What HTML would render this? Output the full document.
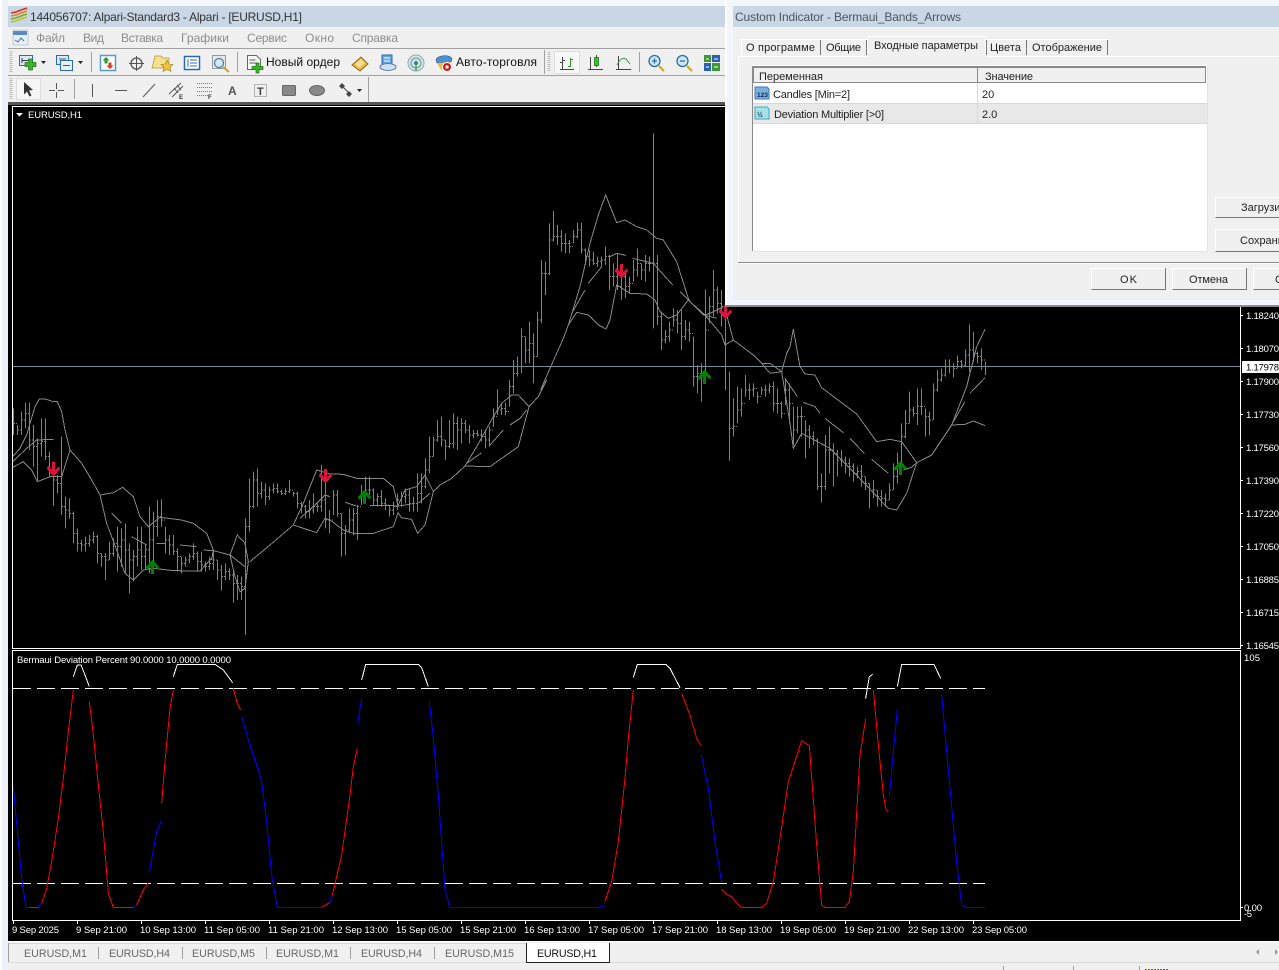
<!DOCTYPE html>
<html><head><meta charset="utf-8"><title>EURUSD,H1</title>
<style>
html,body{margin:0;padding:0;background:#f0f0f0;overflow:hidden}
svg{display:block;font-family:"Liberation Sans","Noto Sans CJK SC",sans-serif}
.l{fill:none;stroke:#888;stroke-width:3;shape-rendering:crispEdges}
.b{fill:none;stroke:#808080;stroke-width:1;shape-rendering:crispEdges}
.k{fill:none;stroke:#808080;stroke-width:3;stroke-dasharray:1 1;shape-rendering:crispEdges}
.c{fill:#fff;font-size:9.5px}
.m{fill:#8c8c8c;font-size:12px}
.d{fill:#222;font-size:11px}
.t{fill:#666;font-size:10.7px}
.g{fill:none;stroke:#a0a0a0;stroke-width:1;shape-rendering:crispEdges}
</style></head><body>
<svg width="1279" height="970" viewBox="0 0 1279 970" xmlns="http://www.w3.org/2000/svg">
<rect width="1279" height="970" fill="#f0f0f0"/>
<rect width="1279" height="6" fill="#f4f7fc"/>
<rect width="8" height="970" fill="#eef2f8"/>
<rect width="2" height="970" fill="#fff"/>
<rect x="8" y="6" width="720" height="21" fill="#c9d6e3"/>
<!-- title icon -->
<g fill="none" stroke-width="1.6"><path d="M11 13l5-1 5-2 6-2" stroke="#e03020"/><path d="M11 16l5-1 5-2 6-2" stroke="#f08020"/><path d="M11 19l5-1 5-2 6-2" stroke="#70b020"/><path d="M11 22l5-1 5-2 6-2" stroke="#c8c020"/></g>
<text x="30" y="21" font-size="12" fill="#333" textLength="272">144056707: Alpari-Standard3 - Alpari - [EURUSD,H1]</text>
<!-- menu -->
<rect x="13" y="30" width="15" height="15" fill="#e8eef6" stroke="#9ab" stroke-width=".5"/><rect x="13" y="31" width="14" height="4" fill="#5a88c0"/><path d="M15 40l3 2 3-4 3 3" stroke="#4070a0" fill="none"/>
<text class="m" x="36" y="42" textLength="29">Файл</text>
<text class="m" x="83" y="42" textLength="21">Вид</text>
<text class="m" x="121" y="42" textLength="42">Вставка</text>
<text class="m" x="181" y="42" textLength="48">Графики</text>
<text class="m" x="247" y="42" textLength="40">Сервис</text>
<text class="m" x="305" y="42" textLength="29">Окно</text>
<text class="m" x="352" y="42" textLength="46">Справка</text>
<!-- toolbar lines -->
<path d="M8 48.500H728M8 75.500H728" stroke="#a8a8a8" class="g"/>
<path d="M11 51V73M11 78V100M549 52V72" stroke="#bbb" stroke-width="3" stroke-dasharray="1 1" fill="none"/>
<path d="M91.500 52V72M237.500 52V72M544.500 50V74M639.500 52V72M74.500 79V99M368.500 77V102" class="g"/>
<!-- toolbar 1 icons -->
<g>
<rect x="19.500" y="55.500" width="13" height="10" fill="#dce8f5" stroke="#2a6ab0"/><path d="M22 58v5M22 60.500h7" stroke="#335" fill="none"/><path d="M28.500 59h4v3.500h3.500v4h-3.500v3.500h-4v-3.500h-3.500v-4h3.500z" fill="#3cb030" stroke="#1a7a10" stroke-width=".7"/>
<path d="M41 61h5l-2.500 3z" fill="#222"/>
<rect x="56.500" y="55.500" width="12" height="9" fill="#dce8f5" stroke="#2a6ab0"/><rect x="60.500" y="60.500" width="12" height="10" fill="#e8f0f8" stroke="#2a6ab0"/><path d="M59 59h7M63 65.500h7" stroke="#556"/>
<path d="M78 61h5l-2.500 3z" fill="#222"/>
<rect x="100.500" y="55.500" width="15" height="15" fill="#fff" stroke="#5a9ac8" stroke-width="1.500"/><path d="M106 57l3.500 3.500h-2v3h-3v-3h-2z" fill="#2a9a30"/><path d="M110 69l3.500-3.500h-2v-3h-3v3h-2z" fill="#d04020"/>
<circle cx="136.500" cy="63.500" r="5.500" fill="none" stroke="#555" stroke-width="1.300"/><path d="M136.500 56v15M129 63.500h15" stroke="#555" fill="none"/>
<path d="M155 56h6l2 2h6v4l-6 6h-11z" fill="#f5e090" stroke="#b89030" stroke-width=".7"/><path d="M167 60l2 4 4 .5-3 3 1 4-4-2-4 2 1-4-3-3 4-.5z" fill="#f0c040" stroke="#a08020" stroke-width=".6"/>
<rect x="184.500" y="56.500" width="15" height="13" fill="#fff" stroke="#2a6ab0" stroke-width="1.500"/><path d="M188 59v8M190 60h7M190 63h7M190 66h7" stroke="#3a70b0" fill="none"/>
<rect x="212.500" y="55.500" width="13" height="13" fill="#e8e8e8" stroke="#999"/><circle cx="219" cy="63" r="4.500" fill="#d8e8f5" stroke="#4a80a8" stroke-width="1.300"/><path d="M223 67l6 5" stroke="#c8a030" stroke-width="2" fill="none"/>
<path d="M247.500 55.500h9l4 4v10h-13z" fill="#f8f8f8" stroke="#666"/><path d="M249.500 60h6M249.500 63h8" stroke="#555" fill="none"/><path d="M256 63h3v3.500h4v3h-4v3.500h-3v-3.500h-4v-3h4z" fill="#3cb030" stroke="#1a7a10" stroke-width=".7"/>
<text x="266" y="66" font-size="12" fill="#111" textLength="74">Новый ордер</text>
<path d="M352 65l9-8 7 7-8 7z" fill="#e8b840" stroke="#8a6a20"/><path d="M355 64l6-5 4 4-6 5z" fill="#f5dc90"/>
<path d="M382 55h10v9h-10z" fill="#60a8e0" stroke="#2a6ab0"/><path d="M384 58h6M384 61h6" stroke="#fff"/><ellipse cx="388" cy="67" rx="8" ry="3.500" fill="#cfdfef" stroke="#5a80a8"/>
<circle cx="416" cy="63" r="8" fill="#d8e0e8" stroke="#8ab" stroke-width="1"/><circle cx="416" cy="63" r="5" fill="none" stroke="#5aa878"/><circle cx="416" cy="63" r="2" fill="#3a80b0"/><path d="M416 63v8" stroke="#2a8030" fill="none"/>
<path d="M436 60c1-5 14-6 16-1l-1 3-14 1z" fill="#4a90d0" stroke="#2a5a90" stroke-width=".6"/><path d="M437 63l14-1-4 8h-6z" fill="#e8c040"/><circle cx="447" cy="67" r="4.500" fill="#d01818" stroke="#fff"/><rect x="445.500" y="65.500" width="3" height="3" fill="#fff"/>
<text x="456" y="66" font-size="12" fill="#111" textLength="81">Авто-торговля</text>
<rect x="554.500" y="51.500" width="25" height="22" fill="#f8f8f8" stroke="#ddd"/>
<path d="M562.500 57v13M560 69.500h14M560 62.500h2M563 60.500h2" stroke="#444" fill="none"/><path d="M570.500 58v9M568 66.500h2M571 59.500h2" stroke="#2a9a20" fill="none"/>
<path d="M588 69.500h15M590.500 57v13M596.500 55v12" stroke="#444" fill="none"/><rect x="594.500" y="57.500" width="4" height="8" fill="#3cc030" stroke="#1a7a10" stroke-width=".8"/>
<path d="M618.500 56v14M616 69.500h15" stroke="#444" fill="none"/><path d="M617 65c3-6 6-8 9-6l4 5" stroke="#2a9a40" fill="none"/>
<circle cx="654.500" cy="61" r="5.500" fill="#cfe4f5" stroke="#2a70a0" stroke-width="1.300"/><path d="M652 61h5M654.500 58.500v5" stroke="#2a70a0" fill="none" stroke-width="1.300"/><path d="M659 66l5 5" stroke="#c8a830" stroke-width="2.200"/>
<circle cx="682.500" cy="61" r="5.500" fill="#cfe4f5" stroke="#2a70a0" stroke-width="1.300"/><path d="M680 61h5" stroke="#2a70a0" stroke-width="1.300"/><path d="M687 66l5 5" stroke="#c8a830" stroke-width="2.200"/>
<rect x="704" y="55" width="7" height="7" fill="#3a9a30"/><rect x="712" y="55" width="8" height="7" fill="#2a60b0"/><rect x="704" y="63" width="7" height="8" fill="#2a60b0"/><rect x="712" y="63" width="8" height="8" fill="#3a9a30"/><path d="M706 59h3M714 59h4M706 67h3M714 67h4" stroke="#fff"/>
</g>
<!-- toolbar 2 icons -->
<g>
<rect x="16.500" y="78.500" width="24" height="21" fill="#f6f6f6" stroke="#ddd"/>
<path d="M24 82l9 8-4 .5 2.500 5-2 1-2.500-5-3 3z" fill="#333"/>
<path d="M56.500 83v6M56.500 92v6M49 90.500h6M58 90.500h6" stroke="#555" fill="none"/>
<path d="M92.500 84v13" stroke="#555" fill="none"/>
<path d="M115 90.500h12" stroke="#555" fill="none"/>
<path d="M143 97l12-13" stroke="#666" fill="none" stroke-width="1.200"/>
<path d="M169 94l12-11M172 97l11-11M174 88l4 5M177 85l4 5" stroke="#555" fill="none"/><text x="179" y="99" font-size="6" font-weight="bold" fill="#333">E</text>
<path d="M197 83.500h15M197 87.500h15M197 91.500h15M197 95.500h11" stroke="#777" stroke-dasharray="1 1" fill="none"/><text x="208" y="99" font-size="6" font-weight="bold" fill="#333">F</text>
<text x="228" y="95" font-size="12" font-weight="bold" fill="#555">A</text>
<rect x="254.500" y="84.500" width="12" height="12" fill="none" stroke="#777" stroke-dasharray="1 1"/><text x="257" y="95" font-size="11" font-weight="bold" fill="#444">T</text>
<rect x="282.500" y="85.500" width="13" height="10" rx="1" fill="#888" stroke="#666"/>
<ellipse cx="317" cy="90.500" rx="7.500" ry="5" fill="#888" stroke="#666"/>
<path d="M339 86l3-3 3 3-3 3zM346 94l3-3 3 3-3 3z" fill="#444"/><path d="M343 87l6 6" stroke="#444" fill="none"/>
<path d="M357 89h5l-2.500 3z" fill="#222"/>
</g>
<rect x="8" y="102" width="720" height="3" fill="#555"/>
<!-- chart black -->
<rect x="8" y="105" width="1271" height="837" fill="#000"/>
<path d="M12.500 106.500H1240.500V648.500H12.500ZM12.500 650.500H1240.500V920.500H12.500Z" fill="none" stroke="#fff" shape-rendering="crispEdges"/>
<path d="M16 113h7l-3.500 3.500z" fill="#fff"/>
<text class="c" x="28" y="118" textLength="54">EURUSD,H1</text>
<path d="M13 366.500H1240" stroke="#778899" shape-rendering="crispEdges"/>
<!-- bars -->
<g transform="translate(.5,380) scale(1,.33333)"><path class="b" d="M13 85V165M17 135V165M21 95V165M25 68V145M29 68V210M33 135V260M37 175V305M41 115V230M45 115V240M49 215V290M53 250V378M57 285V340M61 170V405M65 350V445M69 355V415M73 395V490M77 445V515M81 480V515M85 470V515M89 465V500M93 455V490M97 465V550M101 520V560M105 520V600M109 485V540M113 475V530M117 440V575M121 445V560M125 430V580M129 490V640M133 510V605M137 440V560M141 440V570M145 495V570M149 380V580M153 395V580M157 360V470M161 358V440M165 440V520M169 465V525M173 465V525M177 505V575M181 530V580M185 530V560M189 520V550M193 490V540M197 515V575M201 515V575M205 545V575M209 530V570M213 510V570M217 540V600M221 555V632M225 550V600M229 565V600M233 570V668M237 585V660M241 590V660M245 415V765M249 295V455M253 275V385M257 265V380M261 305V355M265 310V375M269 320V360M273 310V340M277 310V340M281 330V345M285 325V345M289 300V340M293 335V350M297 335V385M301 365V400M305 375V415M309 360V415M313 340V400M317 370V395M321 255V395M325 290V445M329 390V460
M333 330V405M337 330V410M341 400V530M345 435V525M349 385V460M353 385V465M357 375V480M361 315V375M365 290V365M369 290V345M373 325V375M377 340V380M381 330V380M385 355V390M389 375V410M393 365V405M397 340V390M401 335V380M405 325V370M409 325V395M413 350V395M417 280V395M421 280V370M425 235V325M429 170V280M433 170V230M437 120V185M441 110V200M445 180V240M449 120V205M453 100V205M457 110V210M461 115V190M465 120V160M469 135V190M473 150V175M477 150V170M481 148V185M485 148V205M489 140V200M493 85V140M497 28V105M501 68V105M505 68V105"/></g>
<g transform="translate(0,380) scale(1,.33333)"><path class="k" d="M14 130h3M18 150h3M22 120h3M26 100h3M30 180h3M34 200h3M38 190h3M42 185h3M46 230h3M50 270h3M54 300h3M58 310h3M62 380h3M66 390h3M70 400h3M74 460h3M78 490h3M82 495h3M86 490h3M90 480h3M94 470h3M98 520h3M102 530h3M106 540h3M110 520h3M114 490h3M118 500h3M122 480h3M126 510h3M130 540h3M134 530h3M138 510h3M142 530h3M146 510h3M150 480h3M154 440h3M158 410h3M162 420h3M166 480h3M170 495h3M174 515h3M178 530h3M182 550h3M186 540h3M190 530h3M194 520h3M198 545h3M202 555h3M206 560h3M210 550h3M214 540h3M218 570h3M222 590h3M226 575h3M230 585h3M234 610h3M238 610h3M242 620h3M246 440h3M250 380h3M254 300h3M258 340h3M262 330h3M266 350h3M270 330h3M274 325h3M278 335h3M282 340h3M286 335h3M290 330h3M294 340h3M298 370h3M302 380h3M306 395h3M310 390h3M314 380h3M318 380h3M322 360h3M326 420h3M330 420h3
M334 345h3M338 400h3M342 460h3M346 450h3M350 420h3M354 400h3M358 380h3M362 350h3M366 330h3M370 330h3M374 360h3M378 350h3M382 370h3M386 375h3M390 390h3M394 380h3M398 360h3M402 350h3M406 345h3M410 370h3M414 370h3M418 340h3M422 320h3M426 270h3M430 230h3M434 180h3M438 170h3M442 180h3M446 200h3M450 190h3M454 130h3M458 150h3M462 130h3M466 150h3M470 165h3M474 160h3M478 165h3M482 170h3M486 180h3M490 150h3M494 110h3M498 90h3M502 85h3M506 95h3"/></g>
<g transform="translate(.5,130) scale(1,.33333)"><path class="b" d="M509 750V830M513 690V790M517 680V740M521 595V730M525 620V700M529 575V700M533 610V760M537 545V680M541 390V580M545 395V495M549 280V435M553 243V335M557 285V345M561 300V365M565 310V370M569 330V370M573 300V340M577 278V325M581 278V370M585 355V405M589 360V410M593 365V405M597 380V410M601 380V410M605 350V405M609 375V480M613 400V470M617 370V480M621 410V510M625 430V505M629 440V490M633 390V455M637 355V440M641 400V450M645 375V455M649 380V425M653 10V595M657 375V585M661 545V660M665 600V640M669 575V635M673 535V590M677 540V610M681 540V660M685 570V630M689 575V635M693 620V770M697 705V790M701 700V815M705 478V760M709 500V580M713 420V560M717 470V550M721 480V590M725 550V780"/></g>
<g transform="translate(0,130) scale(1,.33333)"><path class="k" d="M510 770h3M514 730h3M518 710h3M522 620h3M526 660h3M530 640h3M534 680h3M538 570h3M542 430h3M546 430h3M550 330h3M554 320h3M558 320h3M562 340h3M566 340h3M570 350h3M574 320h3M578 300h3M582 360h3M586 380h3M590 390h3M594 400h3M598 395h3M602 390h3M606 380h3M610 440h3M614 440h3M618 470h3M622 440h3M626 470h3M630 460h3M634 420h3M638 400h3M642 420h3M646 400h3M650 400h3M654 400h3M658 560h3M662 630h3M666 620h3M670 600h3M674 570h3M678 580h3M682 620h3M686 600h3M690 610h3M694 740h3M698 730h3M702 730h3M706 600h3M710 530h3M714 480h3M718 520h3M722 530h3"/></g>
<g transform="translate(.5,290) scale(1,.33333)"><path class="b" d="M729 245V512M733 325V440M737 290V400M741 295V380M745 255V320M749 280V330M753 280V320M757 305V340M761 290V315M765 285V320M769 280V310M773 275V365M777 295V370M781 335V385M785 265V345M789 280V400M793 350V465M797 350V430M801 350V440M805 390V505M809 405V475M813 425V465M817 445V600M821 550V638M825 435V600M829 410V550M833 460V590M837 480V560M841 480V530M845 500V550M849 505V560M853 520V575M857 530V565M861 525V590M865 560V600M869 580V655M873 570V625M877 600V650M881 600V650M885 610V650M889 580V630M893 520V600M897 488V580M901 400V520M905 360V445M909 305V400M913 350V380M917 295V405M921 295V375M925 355V440M929 365V435M933 280V390M937 240V305M941 235V275M945 208V260M949 208V250M953 220V262M957 197V235M961 210V235M965 178V230M969 103V245M973 125V215M977 185V220M981 175V240M985 215V255"/></g>
<g transform="translate(0,290) scale(1,.33333)"><path class="k" d="M730 415h3M734 410h3M738 360h3M742 340h3M746 300h3M750 300h3M754 295h3M758 320h3M762 300h3M766 300h3M770 290h3M774 340h3M778 340h3M782 370h3M786 300h3M790 340h3M794 420h3M798 380h3M802 380h3M806 420h3M810 440h3M814 450h3M818 590h3M822 590h3M826 480h3M830 480h3M834 490h3M838 510h3M842 510h3M846 520h3M850 530h3M854 550h3M858 545h3M862 560h3M866 580h3M870 600h3M874 600h3M878 620h3M882 625h3M886 630h3M890 600h3M894 560h3M898 530h3M902 440h3M906 400h3M910 360h3M914 370h3M918 350h3M922 350h3M926 380h3M930 390h3M934 300h3M938 270h3M942 255h3M946 230h3M950 230h3M954 235h3M958 215h3M962 225h3M966 195h3M970 180h3M974 190h3M978 200h3M982 210h3"/></g>
<!-- bands -->
<g transform="translate(0,380) scale(.33333)"><path class="l" d="M38 230L60 205L80 165L90 130L105 80L118 57L135 57L160 65L172 65L185 95L195 150L210 210M38 262L70 245L95 270L112 305L150 290L185 290L210 210M38 245L80 205L110 180L160 178M210 210L245 250L275 300L300 345M300 345L340 338L368 322L400 350L420 410L445 440L480 412L545 420L580 430L620 460L640 510L635 540M300 345L320 430L350 510L375 580L400 600L430 570L460 565L520 572L600 573L635 535L640 510M335 400L365 430M395 470L440 495M470 490L495 490M540 495L590 500M610 510L640 512L690 525L735 560M690 525L712 465L735 490L745 545M690 525L705 590L720 635L735 625L745 545M750 545L810 495L880 435M880 435L910 370L950 270L990 282M880 435L950 458L975 415L990 420M900 415L950 370L975 345L990 350"/></g>
<g transform="translate(330,380) scale(.33333)"><path class="l" d="M0 282L40 283L80 295L160 295L190 320L205 380M0 420L40 450L70 460L130 460L190 440L205 395M45 367L80 378M120 376L170 376L205 378L245 372M205 375L225 330L260 320L285 285L310 335M205 400L215 413L245 418L263 460L285 435L310 335M265 370L300 340M310 335L330 315L365 295L405 258M405 258L440 200L490 110L515 70L545 45L565 45L597 80M405 258L480 260L515 235L565 200L597 80M410 250L455 218M480 195L520 150M540 135L570 115L590 90M597 80L625 50L650 0"/></g>
<g transform="translate(500,130) scale(.33333)"><path class="l" d="M122 780L150 715L190 625L205 585M205 585L240 470L270 340L295 255L317 195L335 240L350 278L375 270L410 290L440 300L470 325L490 330L530 395L565 505L570 515M205 585L230 547L265 555L295 585L318 597L330 570L350 465L390 490L440 492L465 510L480 545L505 565L530 555L565 510M215 550L255 480M265 460L305 410M330 380L350 370L378 376M398 385L460 400L518 465M540 485L610 555L650 565"/></g>
<g transform="translate(690,290) scale(.33333)"><path class="l" d="M0 35L45 75L95 135L105 165L130 150M45 75L60 70L100 50M110 75L130 150L190 195L215 220L240 220L275 245M215 220L240 250L275 245M275 245L290 190L300 170L310 118L330 230L345 252L375 255L395 293L500 372L560 455L600 448L635 455L660 490L680 518M275 245L300 400L310 475L335 430L420 475L480 535L595 655L620 660L650 610L680 518M285 265L322 320M340 337L375 350L390 370M405 385L460 428M480 445L523 490M545 508L595 550M640 540L665 532L680 518M680 518L725 495L785 405M785 405L830 290L860 170L885 118M785 405L825 403L850 393L885 407M790 395L825 335M840 310L885 263"/></g>
<!-- arrows -->
<g fill="#dc143c" shape-rendering="crispEdges">
<path d="M52 462h3v8l4-4 1 3-6 7h-1l-6-7 1-3 4 4z"/>
<path transform="translate(272,7)" d="M52 462h3v8l4-4 1 3-6 7h-1l-6-7 1-3 4 4z"/>
<path transform="translate(568,-198)" d="M52 462h3v8l4-4 1 3-6 7h-1l-6-7 1-3 4 4z"/>
<path transform="translate(672,-157)" d="M52 462h3v8l4-4 1 3-6 7h-1l-6-7 1-3 4 4z"/>
</g>
<g fill="#008000" shape-rendering="crispEdges">
<path d="M151 574h3v-8l4 4 1-3-6-7h-1l-6 7 1 3 4-4z"/>
<path transform="translate(212,-70)" d="M151 574h3v-8l4 4 1-3-6-7h-1l-6 7 1 3 4-4z"/>
<path transform="translate(552,-190)" d="M151 574h3v-8l4 4 1-3-6-7h-1l-6 7 1 3 4-4z"/>
<path transform="translate(748,-99)" d="M151 574h3v-8l4 4 1-3-6-7h-1l-6 7 1 3 4-4z"/>
</g>
<!-- y labels -->
<path d="M1241 315.500h2M1241 348.500h2M1241 381.500h2M1241 414.500h2M1241 447.500h2M1241 480.500h2M1241 513.500h2M1241 546.500h2M1241 579.500h2M1241 612.500h2M1241 645.500h2M1241 907.500h2" stroke="#fff" shape-rendering="crispEdges"/>
<g class="c">
<text x="1246" y="319" textLength="33">1.18240</text>
<text x="1246" y="352" textLength="33">1.18070</text>
<text x="1246" y="385" textLength="33">1.17900</text>
<text x="1246" y="418" textLength="33">1.17730</text>
<text x="1246" y="451" textLength="33">1.17560</text>
<text x="1246" y="484" textLength="33">1.17390</text>
<text x="1246" y="517" textLength="33">1.17220</text>
<text x="1246" y="550" textLength="33">1.17050</text>
<text x="1246" y="583" textLength="33">1.16885</text>
<text x="1246" y="616" textLength="33">1.16715</text>
<text x="1246" y="649" textLength="33">1.16545</text>
</g>
<rect x="1242" y="361" width="37" height="12" fill="#fff"/>
<text x="1246" y="370.500" font-size="9.500" fill="#000" textLength="33">1.17978</text>
<!-- subwindow -->
<text class="c" x="17" y="663" textLength="214">Bermaui Deviation Percent 90.0000 10.0000 0.0000</text>
<path d="M13 688.500H985M13 883.500H985" stroke="#fff" stroke-dasharray="18 6" shape-rendering="crispEdges"/>
<g transform="translate(0,645) scale(.33333)" fill="none" stroke-width="3" shape-rendering="crispEdges">
<path stroke="#00f" d="M40 425L55 590L65 700L78 787L88 787M115 787L125 775M400 787L410 780M448 682L470 560L485 525M725 215L750 300L775 375L785 410L800 530L815 690L832 787L965 787M990 772L997 750M1073 235L1085 160M1288 170L1300 280L1315 450L1335 735L1350 787L1500 787"/>
<path stroke="#f00" d="M88 787L115 787M125 775L140 730L155 650L175 520L190 400L205 260L220 135M268 170L280 270L295 420L310 560L325 745L340 787L400 787M410 780L430 735L445 712M485 475L495 350L510 190L520 135M700 130L712 175L722 195M965 787L990 772M997 750L1025 630L1050 450L1060 365L1072 310"/>
<path stroke="#fff" d="M220 95L232 60L243 60L255 90L268 125M520 95L532 58L645 58L670 75L698 113M1085 105L1097 58L1255 58L1265 68L1285 125"/>
</g>
<g transform="translate(500,645) scale(.33333)" fill="none" stroke-width="3" shape-rendering="crispEdges">
<path stroke="#00f" d="M0 787L295 787L315 782M604 330L625 430L645 590L665 712M1168 453L1192 193M1325 150L1350 430L1370 650L1385 780L1397 787L1455 787"/>
<path stroke="#f00" d="M315 768L335 710L355 590L375 400L385 280L400 135M545 145L570 210L590 280L603 302M665 733L680 748L695 755L715 780L725 787L785 787L800 775L820 710L840 580L865 410L905 287L928 302L950 600L965 780L975 787L1035 787L1048 770L1060 680L1080 330L1097 222M1120 135L1135 300L1150 450L1158 495L1166 500"/>
<path stroke="#fff" d="M400 97L412 58L497 58L510 70L540 128M1097 160L1108 95L1118 88M1192 125L1205 58L1302 58L1322 100"/>
</g>
<text class="c" x="1244" y="661" textLength="16">105</text>
<text class="c" x="1244" y="911" textLength="18">0.00</text>
<text class="c" x="1244" y="917" textLength="8">-5</text>
<!-- time axis -->
<path d="M13.500 921v3M77.500 921v3M141.500 921v3M205.500 921v3M269.500 921v3M333.500 921v3M397.500 921v3M461.500 921v3M525.500 921v3M589.500 921v3M653.500 921v3M717.500 921v3M781.500 921v3M845.500 921v3M909.500 921v3M973.500 921v3" stroke="#fff" shape-rendering="crispEdges"/>
<g class="c">
<text x="12" y="933" textLength="47">9 Sep 2025</text>
<text x="76" y="933" textLength="51">9 Sep 21:00</text>
<text x="140" y="933" textLength="56">10 Sep 13:00</text>
<text x="204" y="933" textLength="56">11 Sep 05:00</text>
<text x="268" y="933" textLength="56">11 Sep 21:00</text>
<text x="332" y="933" textLength="56">12 Sep 13:00</text>
<text x="396" y="933" textLength="56">15 Sep 05:00</text>
<text x="460" y="933" textLength="56">15 Sep 21:00</text>
<text x="524" y="933" textLength="56">16 Sep 13:00</text>
<text x="588" y="933" textLength="56">17 Sep 05:00</text>
<text x="652" y="933" textLength="56">17 Sep 21:00</text>
<text x="716" y="933" textLength="56">18 Sep 13:00</text>
<text x="780" y="933" textLength="56">19 Sep 05:00</text>
<text x="844" y="933" textLength="56">19 Sep 21:00</text>
<text x="908" y="933" textLength="56">22 Sep 13:00</text>
<text x="972" y="933" textLength="55">23 Sep 05:00</text>
</g>
<!-- bottom -->
<path d="M8 941.500H1279" stroke="#fff" shape-rendering="crispEdges"/>
<rect x="8" y="943" width="1271" height="27" fill="#f0f0f0"/>
<path d="M8 943.500H526M610 962.500H1279" stroke="#d8d8d8" shape-rendering="crispEdges"/>
<path d="M8.500 943V963M98.500 947V959M182.500 947V959M266.500 947V959M350.500 947V959M434.500 947V959" class="g"/>
<path d="M8 962.500H526" stroke="#ddd" shape-rendering="crispEdges"/>
<path d="M526.500 943V962.500H609.500V943" fill="#fff" stroke="#222" shape-rendering="crispEdges"/>
<g class="t">
<text x="24" y="957" textLength="63">EURUSD,M1</text>
<text x="109" y="957" textLength="61">EURUSD,H4</text>
<text x="192" y="957" textLength="63">EURUSD,M5</text>
<text x="276" y="957" textLength="63">EURUSD,M1</text>
<text x="361" y="957" textLength="61">EURUSD,H4</text>
<text x="445" y="957" textLength="69">EURUSD,M15</text>
<text x="537" y="957" textLength="60" fill="#111">EURUSD,H1</text>
</g>
<path d="M1259 949v6l-3-3zM1275 949v6l3-3z" fill="#999"/>
<path d="M1003.500 966V970M1073.500 966V970M1139.500 966V970" class="g"/>
<path d="M1145 969.500h23" stroke="#6a6a20" stroke-dasharray="2 1"/>
<!-- dialog -->
<rect x="725" y="0" width="554" height="305" fill="#f2f6fc"/>
<rect x="725" y="305" width="554" height="2" fill="#8a8a8a"/>
<rect x="725" y="0" width="2" height="305" fill="#fff"/>
<rect x="733" y="6" width="546" height="21" fill="#c9d6e3"/>
<rect x="733" y="27" width="546" height="273" fill="#f0f0f0"/>
<text x="735" y="21" font-size="12" fill="#4a5560" textLength="226">Custom Indicator - Bermaui_Bands_Arrows</text>
<!-- tabs -->
<path d="M741.500 55V39.500H820.500V55M820.500 39.500H866.500V55M986.500 39.500H1026.500V55M1026.500 39.500H1107.500V55" fill="none" stroke="#fff" shape-rendering="crispEdges"/>
<path d="M820.500 40V55M866.500 40V55M986.500 40V55M1026.500 40V55M1107.500 40V55" stroke="#777" shape-rendering="crispEdges"/>
<rect x="867" y="36" width="119" height="21" fill="#f0f0f0"/>
<path d="M867.500 56V36.500H985.500V56" fill="none" stroke="#fff" shape-rendering="crispEdges"/>
<path d="M738 56.500H867M986 56.500H1279M738.500 56V263" stroke="#fff" fill="none" shape-rendering="crispEdges"/>
<text class="d" x="746" y="51" textLength="69">О программе</text>
<text class="d" x="826" y="51" textLength="35">Общие</text>
<text class="d" x="874" y="49" textLength="104">Входные параметры</text>
<text class="d" x="990" y="51" textLength="31">Цвета</text>
<text class="d" x="1032" y="51" textLength="70">Отображение</text>
<!-- table -->
<rect x="752" y="65" width="455" height="187" fill="#fff"/>
<path d="M1207.500 65V251.500H752" fill="none" stroke="#e4e4e4" shape-rendering="crispEdges"/>
<rect x="753" y="67" width="452" height="16" fill="#f0f0f0"/>
<path d="M752.500 66V251M753.500 66V83M752 66.500H1206M752 67.500H1206M1205.500 66V83M753 82.500H1206M977.500 67V82" stroke="#8a8a8a" shape-rendering="crispEdges" fill="none"/>
<rect x="753" y="104" width="454" height="20" fill="#e8e8e8"/>
<path d="M977.500 83V124M753 103.500H1207M753 123.500H1207" stroke="#d8d8d8" shape-rendering="crispEdges"/>
<text class="d" x="759" y="80" textLength="64">Переменная</text>
<text class="d" x="985" y="80" textLength="48">Значение</text>
<path d="M755 87h12l2 2v10h-14z" fill="#7ab0e0" stroke="#3a78b8"/><text x="757" y="97" font-size="6.500" font-weight="bold" fill="#124">123</text>
<path d="M755 107h12l2 2v10h-14z" fill="#a8e0e8" stroke="#40a8c0"/><text x="757" y="117" font-size="7" font-weight="bold" fill="#146">½</text>
<text class="d" x="773" y="98" textLength="77">Candles [Min=2]</text>
<text class="d" x="774" y="118" textLength="110">Deviation Multiplier [&gt;0]</text>
<text class="d" x="982" y="98">20</text>
<text class="d" x="982" y="118">2.0</text>
<!-- separator and buttons -->
<path d="M738 262.500H1279" stroke="#8a8a8a" shape-rendering="crispEdges"/>
<path d="M738 263.500H1279" stroke="#fff" shape-rendering="crispEdges"/>
<g fill="#f0f0f0" stroke="#777" shape-rendering="crispEdges">
<path d="M1215.500 217.500H1279M1215.500 251.500H1279M1091.500 289.500H1165.500V268M1172.500 289.500H1246.500V268M1253.500 289.500H1279"/>
</g>
<path d="M1215.500 217V197.500H1279M1215.500 251V229.500H1279M1091.500 289V268.500H1165M1172.500 289V268.500H1246M1253.500 289V268.500H1279" fill="none" stroke="#fff" shape-rendering="crispEdges"/>
<g font-size="11" fill="#222">
<text x="1241" y="211">Загрузить</text>
<text x="1240" y="244">Сохранить</text>
<text x="1120" y="283" textLength="17">OK</text>
<text x="1189" y="283" textLength="39">Отмена</text>
<text x="1275" y="283">Сброс</text>
</g>
</svg>
</body></html>
